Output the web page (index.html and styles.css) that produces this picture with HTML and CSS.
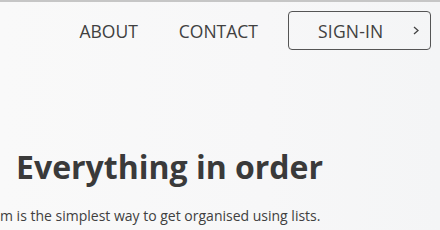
FILE: index.html
```html
<!DOCTYPE html>
<html>
<head>
<meta charset="utf-8">
<link rel="stylesheet" href="styles.css">
</head>
<body>
<header class="topbar">
  <nav class="nav">
    <a class="nav-link about" href="#">ABOUT</a>
    <a class="nav-link contact" href="#">CONTACT</a>
    <a class="signin" href="#">
      <span class="signin-label">SIGN-IN</span>
      <svg class="chev" width="6" height="9" viewBox="0 0 6 9"><path d="M1 1 L5 4.5 L1 8" fill="none" stroke="#444" stroke-width="1.3"/></svg>
    </a>
  </nav>
</header>
<main class="hero">
  <h1 class="title">Everything in order</h1>
  <p class="lead">m is the simplest way to get organised using lists.</p>
</main>
</body>
</html>
```
FILE: styles.css
```css
html, body {
  margin: 0;
  padding: 0;
}
body {
  width: 440px;
  height: 230px;
  overflow: hidden;
  background: linear-gradient(90deg, #f9f9f9 0%, #f7f7f8 60%, #f4f5f6 100%);
  font-family: "Open Sans", "DejaVu Sans", sans-serif;
  color: #404040;
  border-top: 2px solid #c6c6c6;
  box-sizing: border-box;
}
.topbar {
  padding: 9px 9px 0 0;
}
.nav {
  display: flex;
  justify-content: flex-end;
  align-items: center;
}
.nav-link {
  font-size: 17.5px;
  letter-spacing: 0;
  color: #404040;
  text-decoration: none;
}
.about {
  margin-right: 41px;
}
.contact {
  margin-right: 30px;
}
.signin {
  display: flex;
  align-items: center;
  box-sizing: border-box;
  width: 143px;
  height: 39px;
  border: 1px solid #555;
  border-radius: 4px;
  padding: 0 11px 0 29px;
  text-decoration: none;
  color: #404040;
  font-size: 17.5px;
  letter-spacing: 0.2px;
}
.signin-label {
  flex: 1;
}
.chev {
  display: block;
}
.hero {
  padding-top: 101px;
}
.title {
  margin: 0 0 0 16px;
  font-size: 32px;
  line-height: 32px;
  font-weight: 700;
  color: #3a3a3a;
}
.lead {
  margin: 23px 0 0 0;
  font-size: 14px;
  line-height: 20px;
  color: #404040;
}
```
